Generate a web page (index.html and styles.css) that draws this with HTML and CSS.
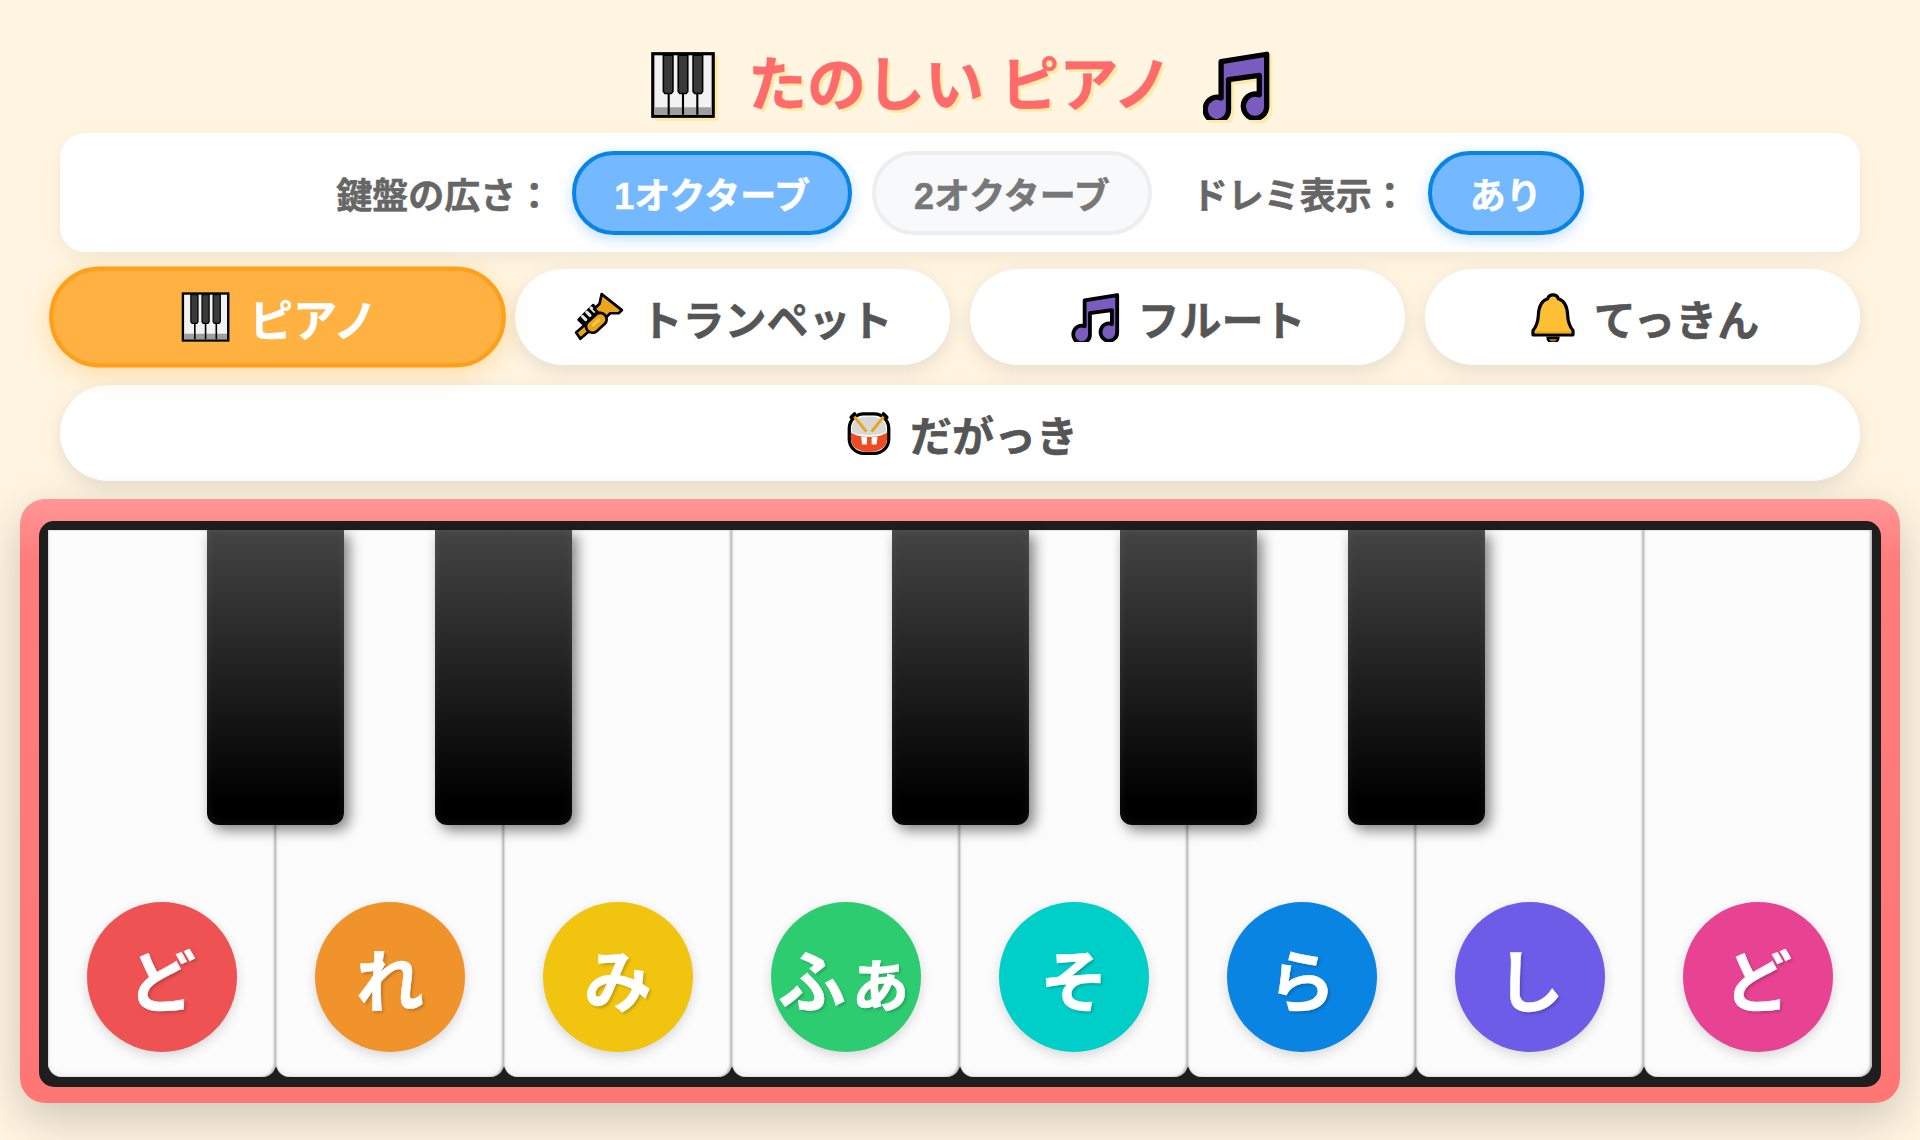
FILE: index.html
```html
<!DOCTYPE html>
<html lang="ja">
  <head>
    <meta charset="utf-8">
    <title>たのしい ピアノ</title>
    <link rel="stylesheet" href="styles.css">
  </head>
  <body>
    <svg class="icon-defs" width="0" height="0">
      <defs>
        <symbol id="i-piano" viewBox="0 0 64 66">
          <rect x="2" y="2" width="60" height="62" fill="#000"/>
          <rect x="5" y="5" width="54" height="56" fill="#f2f2f2"/>
          <rect x="5" y="54" width="54" height="7" fill="#9e9e9e"/>
          <path d="M18.500 5v56M32 5v56M45.500 5v56" stroke="#000" stroke-width="2" fill="none"/>
          <path d="M13.500 5h9v34l-1.500 2h-6l-1.500-2zM27.500 5h9v34l-1.500 2h-6l-1.500-2zM41.500 5h9v34l-1.500 2h-6l-1.500-2z" fill="#3a3a3a" stroke="#000" stroke-width="1.500"/>
        </symbol>
        <symbol id="i-notes" viewBox="0 0 64 66">
          <path d="M17 11 60 4v49a11 11.500 0 1 1-7-10.700V24l-29 4v28a11 11.500 0 1 1-7-10.700z" fill="#7a5cc0" stroke="#000" stroke-width="5" stroke-linejoin="round"/>
        </symbol>
        <symbol id="i-trumpet" viewBox="12 8 47 47">
          <path d="M14 46 29 33 34 38 18 52z" fill="#eaa51a" stroke="#000" stroke-width="2.500" stroke-linejoin="round"/>
          <path d="M16 34 30 20 37 27 23 41z" fill="#000" stroke="#000" stroke-width="2" stroke-linejoin="round"/>
          <path d="M20 31l3 3M24 27l3 3M28 23l3 3" stroke="#e6e6e6" stroke-width="3" stroke-linecap="round"/>
          <path d="M38 10 57 25 54 28 46 28 41 33 31 24 36 19z" fill="#eaa51a" stroke="#000" stroke-width="2.500" stroke-linejoin="round"/>
          <rect x="22" y="31" width="22" height="12" rx="6" transform="rotate(-42 33 37)" fill="#eaa51a" stroke="#000" stroke-width="2.500"/>
          <rect x="28" y="35" width="10" height="3" rx="1.500" transform="rotate(-42 33 37)" fill="#f6c64a"/>
        </symbol>
        <symbol id="i-bell" viewBox="25 20 140 140">
          <path d="M80 148a15 14 0 0 0 30 0z" fill="#a5681c" stroke="#000" stroke-width="7"/>
          <path d="M95 28c8 0 13 4 15 11 19 6 25 23 26 46 1 23 7 33 15 43v12H39v-12c8-10 14-20 15-43 1-23 7-40 26-46 2-7 7-11 15-11z" fill="#fdc034" stroke="#000" stroke-width="9" stroke-linejoin="round"/>
          <path d="M44 130h102v6H44z" fill="#f4a820"/>
        </symbol>
        <symbol id="i-drum" viewBox="14 18 152 152">
          <rect x="30" y="36" width="120" height="120" rx="44" fill="#fff" stroke="#000" stroke-width="10"/>
          <path d="M35 92c12 10 32 14 55 14s43-4 55-14v18c0 24-18 41-55 41s-55-17-55-41z" fill="#ef4a21"/>
          <path d="M66 105l3 24h15v-22zM98 107v22h15l3-24z" fill="#fff"/>
          <path d="M38 90V80c0-24 18-36 52-36s52 12 52 36v10c-12 7-30 10-52 10s-40-3-52-10z" fill="#d8d8d8"/>
          <path d="M42 40 82 90M138 40 98 90" stroke="#e8a71c" stroke-width="9"/>
          <path d="M36 46 46 36M144 46 134 36" stroke="#000" stroke-width="11" stroke-linecap="round"/>
        </symbol>
      </defs>
    </svg>

    <main class="app">
      <h1 class="title">
        <svg class="title-icon"><use href="#i-piano"/></svg>
        <span class="title-text">たのしい ピアノ</span>
        <svg class="title-icon"><use href="#i-notes"/></svg>
      </h1>

      <section class="controls">
        <div class="control-group">
          <span class="control-label">鍵盤の広さ：</span>
          <button class="toggle active">1オクターブ</button>
          <button class="toggle">2オクターブ</button>
        </div>
        <div class="control-group">
          <span class="control-label">ドレミ表示：</span>
          <button class="toggle active">あり</button>
        </div>
      </section>

      <section class="instruments">
        <button class="instrument active"><svg class="instrument-icon"><use href="#i-piano"/></svg>ピアノ</button>
        <button class="instrument"><svg class="instrument-icon"><use href="#i-trumpet"/></svg>トランペット</button>
        <button class="instrument"><svg class="instrument-icon"><use href="#i-notes"/></svg>フルート</button>
        <button class="instrument"><svg class="instrument-icon"><use href="#i-bell"/></svg>てっきん</button>
        <button class="instrument"><svg class="instrument-icon"><use href="#i-drum"/></svg>だがっき</button>
      </section>

      <section class="piano">
        <div class="keyboard">
          <div class="white-keys">
            <div class="key"><span class="note note-do">ど</span></div>
            <div class="key"><span class="note note-re">れ</span></div>
            <div class="key"><span class="note note-mi">み</span></div>
            <div class="key"><span class="note note-fa">ふぁ</span></div>
            <div class="key"><span class="note note-so">そ</span></div>
            <div class="key"><span class="note note-la">ら</span></div>
            <div class="key"><span class="note note-si">し</span></div>
            <div class="key"><span class="note note-do2">ど</span></div>
          </div>
          <div class="black-key pos-1"></div>
          <div class="black-key pos-2"></div>
          <div class="black-key pos-4"></div>
          <div class="black-key pos-5"></div>
          <div class="black-key pos-6"></div>
        </div>
      </section>
    </main>
  </body>
</html>
```

FILE: styles.css
```css
* {
  margin: 0;
  padding: 0;
  box-sizing: border-box;
}

html, body {
  height: 100%;
  overflow: hidden;
}

body {
  background: #fff5e1;
  font-family: "Liberation Sans", "Noto Sans CJK JP", sans-serif;
}

button {
  font-family: inherit;
  font-weight: 700;
  -webkit-text-stroke: .5px currentColor;
}

.icon-defs {
  position: absolute;
}

.app {
  display: flex;
  flex-direction: column;
  align-items: stretch;
  padding: 51px 20px 0;
}

.title {
  display: flex;
  align-items: center;
  justify-content: center;
  gap: 31px;
  height: 67px;
  color: #ff6b6b;
  font-size: 59px;
  font-weight: 700;
  line-height: 65px;
  text-shadow: 3px 3px 0 #ffeaa7;
}

.title-text {
  padding-top: 4px;
  -webkit-text-stroke: .5px currentColor;
}

.title-icon {
  width: 68px;
  height: 70px;
  filter: drop-shadow(3px 3px 0 #ffeaa7);
}

.controls {
  display: flex;
  align-items: center;
  justify-content: center;
  gap: 40px;
  height: 119px;
  margin: 15px 40px 0;
  background: #fff;
  border-radius: 25px;
  box-shadow: 0 6px 20px rgba(0, 0, 0, .06);
}

.control-group {
  display: flex;
  align-items: center;
  gap: 20px;
}

.control-label {
  color: #666;
  font-size: 36px;
  font-weight: 700;
  -webkit-text-stroke: .5px currentColor;
}

.toggle {
  height: 84px;
  padding: 0 38px;
  background: #f8f9fa;
  border: 4px solid #eeeeee;
  border-radius: 42px;
  color: #777;
  font-size: 36px;
}

.toggle.active {
  background: #74b9ff;
  border-color: #0984e3;
  box-shadow: 0 4px 14px rgba(116, 185, 255, .45);
  color: #fff;
}

.instruments {
  display: flex;
  flex-wrap: wrap;
  gap: 20px;
  margin: 17px 40px 0;
}

.instrument {
  display: flex;
  flex: 1 1 400px;
  align-items: center;
  justify-content: center;
  gap: 16px;
  height: 96px;
  padding-left: 2px;
  background: #fff;
  border: 4px solid transparent;
  border-radius: 48px;
  box-shadow: 0 6px 20px rgba(0, 0, 0, .1);
  color: #555;
  font-size: 42px;
}

.instrument.active {
  background: #ffb142;
  border-color: #ff9f1a;
  box-shadow: 0 6px 24px rgba(255, 159, 26, .3);
  color: #fff;
  transform: scale(1.05);
}

.instrument-icon {
  width: 50px;
  height: 50px;
}

.piano {
  height: 604px;
  margin-top: 18px;
  padding: 22px 19px 16px;
  background: linear-gradient(#ff9696, #ff7c7c 10%, #ff7675);
  border-radius: 25px;
  box-shadow: 0 16px 48px rgba(0, 0, 0, .2);
}

.keyboard {
  position: relative;
  height: 100%;
  padding: 9px 9px 10px;
  background: #1e1e1f;
  border-radius: 15px;
}

.white-keys {
  display: flex;
  height: 100%;
}

.key {
  display: flex;
  flex: 1;
  align-items: flex-end;
  justify-content: center;
  padding-bottom: 25px;
  background: #fcfcfc;
  border-radius: 0 0 14px 14px;
  box-shadow: inset -2px 0 2px #bdbdbd, inset 1px 0 1px #dcdcdc, inset 0 -3px 6px rgba(0, 0, 0, .06);
}

.note {
  display: flex;
  align-items: center;
  justify-content: center;
  width: 150px;
  height: 150px;
  border-radius: 50%;
  box-shadow: 0 4px 12px rgba(0, 0, 0, .15);
  color: #fff;
  font-size: 68px;
  font-weight: 700;
  -webkit-text-stroke: .5px currentColor;
  text-shadow: 2px 2px 3px rgba(0, 0, 0, .2);
}

.note-do { background: #ee5253; }
.note-re { background: #f0932b; }
.note-mi { background: #f1c40f; }
.note-fa { background: #2ecc71; }
.note-so { background: #00cec9; }
.note-la { background: #0984e3; }
.note-si { background: #6c5ce7; }
.note-do2 { background: #e84393; }

.black-key {
  position: absolute;
  top: 9px;
  width: 137px;
  height: 295px;
  margin-left: -68.500px;
  background: linear-gradient(#444, #000 92%);
  border-radius: 0 0 12px 12px;
  box-shadow: 5px 5px 14px rgba(0, 0, 0, .5), inset 0 0 10px rgba(255, 255, 255, .08);
}

.pos-1 { left: 236px; }
.pos-2 { left: 464px; }
.pos-4 { left: 921px; }
.pos-5 { left: 1149px; }
.pos-6 { left: 1377px; }
```
